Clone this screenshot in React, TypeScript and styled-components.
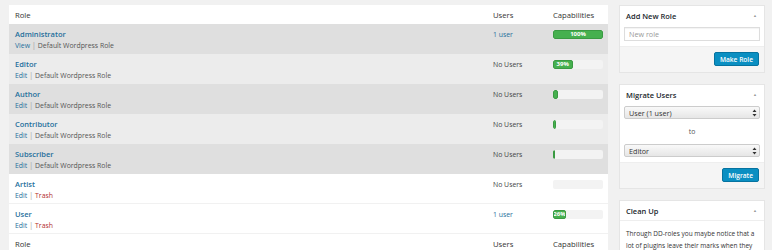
import React from 'react'
import styled, { createGlobalStyle } from 'styled-components'

const GlobalStyle = createGlobalStyle`
  html, body {
    margin: 0;
    padding: 0;
    background: #f1f1f1;
    font-family: "Open Sans", "Liberation Sans", sans-serif;
    font-size: 7px;
    color: #444;
  }
`

type Role = {
  name: string
  links: 'view' | 'edit' | 'trash'
  users: number
  caps: number
  tone: 'dark' | 'light' | 'white'
}

const roles: Role[] = [
  { name: 'Administrator', links: 'view', users: 1, caps: 100, tone: 'dark' },
  { name: 'Editor', links: 'edit', users: 0, caps: 39, tone: 'light' },
  { name: 'Author', links: 'edit', users: 0, caps: 10, tone: 'dark' },
  { name: 'Contributor', links: 'edit', users: 0, caps: 5, tone: 'light' },
  { name: 'Subscriber', links: 'edit', users: 0, caps: 2, tone: 'dark' },
  { name: 'Artist', links: 'trash', users: 0, caps: 0, tone: 'white' },
  { name: 'User', links: 'trash', users: 1, caps: 26, tone: 'white' },
]

const tones = {
  dark: '#dfdfdf',
  light: '#ececec',
  white: '#ffffff',
}

const Page = styled.div`
  display: flex;
  gap: 11px;
  padding: 5px 7px 0 9px;
  align-items: flex-start;
`

const Table = styled.div`
  width: 599px;
  flex-shrink: 0;
`

const Row = styled.div<{ $tone: keyof typeof tones }>`
  display: grid;
  grid-template-columns: 478px 60px 61px;
  height: 30px;
  background: ${(p) => tones[p.$tone]};
  border-bottom: ${(p) => (p.$tone === 'white' ? '1px solid #f1f1f1' : 'none')};
  box-sizing: border-box;
`

const HeadRow = styled.div`
  display: grid;
  grid-template-columns: 478px 60px 61px;
  height: 19px;
  background: #fff;
  align-items: center;
  color: #333;
  font-size: 7.7px;
`

const HeadCell = styled.div`
  padding-left: 6px;
`

const Cell = styled.div`
  padding: 5px 0 0 6px;
`

const RoleName = styled.div`
  color: #1f6f9c;
  font-weight: 600;
  font-size: 7.5px;
  line-height: 11px;
`

const Actions = styled.div`
  line-height: 11px;
  font-size: 6.9px;
  color: #555;
`

const Link = styled.span<{ $danger?: boolean }>`
  color: ${(p) => (p.$danger ? '#b32d2e' : '#1f6f9c')};
`

const Sep = styled.span`
  color: #999;
  margin: 0 2px;
`

const UsersText = styled.div<{ $link: boolean }>`
  line-height: 11px;
  font-size: 6.9px;
  color: ${(p) => (p.$link ? '#1f6f9c' : '#444')};
`

const Bar = styled.div`
  width: 50px;
  height: 9px;
  background: #f3f3f3;
  border-radius: 2px;
  margin-top: 1px;
  overflow: hidden;
`

const Fill = styled.div`
  height: 100%;
  background: #46b04f;
  border: 1px solid #3a9a42;
  box-sizing: border-box;
  border-radius: 2px;
  color: #fff;
  font-size: 6px;
  font-weight: 700;
  line-height: 7px;
  display: flex;
  justify-content: center;
  white-space: nowrap;
  overflow: hidden;
`

const Side = styled.div`
  width: 146px;
  display: flex;
  flex-direction: column;
  gap: 11px;
`

const Box = styled.div`
  background: #fff;
  border: 1px solid #e5e5e5;
  box-sizing: border-box;
`

const BoxTitle = styled.div<{ $line?: boolean }>`
  display: flex;
  justify-content: space-between;
  align-items: center;
  height: 19px;
  padding: 0 7px 0 6px;
  font-weight: 600;
  font-size: 7.5px;
  color: #23282d;
  border-bottom: ${(p) => (p.$line ? '1px solid #eee' : 'none')};
`

const Caret = styled.span`
  font-size: 4px;
  color: #999;
`

const BoxBody = styled.div`
  padding: 2px 4px 5px;
  display: flex;
  flex-direction: column;
`

const Input = styled.div`
  height: 14px;
  border: 1px solid #ddd;
  box-shadow: inset 0 1px 1px rgba(0, 0, 0, 0.05);
  display: flex;
  align-items: center;
  padding-left: 4px;
  color: #999;
  font-size: 7.2px;
  box-sizing: border-box;
`

const Select = styled.div`
  height: 13px;
  border: 1px solid #ccc;
  border-radius: 2px;
  background: linear-gradient(#f9f9f9, #e6e6e6);
  display: flex;
  align-items: center;
  justify-content: space-between;
  padding: 0 2px 0 4px;
  color: #333;
  font-size: 7.2px;
  box-sizing: border-box;
`

const To = styled.div`
  text-align: center;
  line-height: 25px;
  font-size: 6.9px;
  color: #555;
`

const BoxFooter = styled.div`
  background: #f5f5f5;
  border-top: 1px solid #eee;
  display: flex;
  justify-content: flex-end;
  padding: 5px 5px 6px;
`

const Button = styled.div`
  height: 14px;
  padding: 0 5px;
  background: #0a8fc2;
  border: 1px solid #0673a0;
  border-radius: 2px;
  color: #fff;
  font-weight: 600;
  font-size: 6.6px;
  display: flex;
  align-items: center;
  box-sizing: border-box;
`

const Text = styled.div`
  padding: 7px 5px 0 6px;
  font-size: 6.5px;
  line-height: 12px;
  color: #333;
`

const Arrows = () => (
  <svg width="5" height="8" viewBox="0 0 5 8">
    <path d="M2.5 0.5 L4.5 3 L0.5 3 Z M2.5 7.5 L4.5 5 L0.5 5 Z" fill="#333" />
  </svg>
)

function Header() {
  return (
    <HeadRow>
      <HeadCell>Role</HeadCell>
      <HeadCell>Users</HeadCell>
      <HeadCell>Capabilities</HeadCell>
    </HeadRow>
  )
}

export default function App() {
  return (
    <>
      <GlobalStyle />
      <Page>
        <Table>
          <Header />
          {roles.map((r) => (
            <Row key={r.name} $tone={r.tone}>
              <Cell>
                <RoleName>{r.name}</RoleName>
                <Actions>
                  <Link>{r.links === 'view' ? 'View' : 'Edit'}</Link>
                  <Sep>|</Sep>
                  {r.links === 'trash' ? <Link $danger>Trash</Link> : 'Default Wordpress Role'}
                </Actions>
              </Cell>
              <Cell>
                <UsersText $link={r.users > 0}>
                  {r.users > 0 ? `${r.users} user` : 'No Users'}
                </UsersText>
              </Cell>
              <Cell>
                <Bar>
                  {r.caps > 0 && <Fill style={{ width: `${r.caps}%` }}>{r.caps >= 20 ? `${r.caps}%` : ''}</Fill>}
                </Bar>
              </Cell>
            </Row>
          ))}
          <Header />
        </Table>
        <Side>
          <Box>
            <BoxTitle>
              Add New Role <Caret>▲</Caret>
            </BoxTitle>
            <BoxBody>
              <Input>New role</Input>
            </BoxBody>
            <BoxFooter>
              <Button>Make Role</Button>
            </BoxFooter>
          </Box>
          <Box>
            <BoxTitle>
              Migrate Users <Caret>▲</Caret>
            </BoxTitle>
            <BoxBody>
              <Select>
                User (1 user) <Arrows />
              </Select>
              <To>to</To>
              <Select>
                Editor <Arrows />
              </Select>
            </BoxBody>
            <BoxFooter>
              <Button>Migrate</Button>
            </BoxFooter>
          </Box>
          <Box>
            <BoxTitle $line>
              Clean Up <Caret>▲</Caret>
            </BoxTitle>
            <Text>
              Through DD-roles you maybe notice that a lot of plugins leave their marks when they
              are deleted.
            </Text>
          </Box>
        </Side>
      </Page>
    </>
  )
}
